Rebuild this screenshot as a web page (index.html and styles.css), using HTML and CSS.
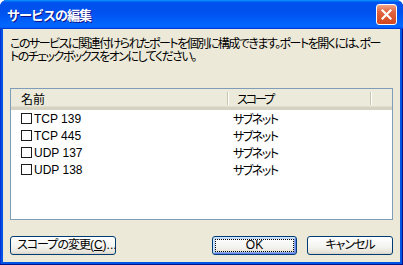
FILE: index.html
```html
<!DOCTYPE html>
<html lang="ja">
<head>
  <meta charset="UTF-8">
  <title>サービスの編集</title>
  <link rel="stylesheet" href="styles.css">
</head>
<body>
  <div class="window">
    <!-- Title bar -->
    <div class="titlebar">
      <span class="title">サービスの編集</span>
      <button class="close-btn" aria-label="閉じる">
        <svg width="11" height="11" viewBox="0 0 11 11">
          <path d="M1.5 1.5 L9.5 9.5 M9.5 1.5 L1.5 9.5" stroke="#fff" stroke-width="2.2" stroke-linecap="square"/>
        </svg>
      </button>
    </div>

    <div class="client">
      <p class="intro">このサービスに関連付けられたポートを個別に構成できます。ポートを開くには、ポー<br>トのチェックボックスをオンにしてください。</p>

      <!-- Port list -->
      <div class="listview">
        <div class="lv-header">
          <div class="col col-name">名前</div>
          <div class="col col-scope">スコープ</div>
          <div class="col col-rest"></div>
        </div>
        <div class="lv-row">
          <span class="cell cell-name"><span class="check"></span>TCP 139</span>
          <span class="cell cell-scope">サブネット</span>
        </div>
        <div class="lv-row">
          <span class="cell cell-name"><span class="check"></span>TCP 445</span>
          <span class="cell cell-scope">サブネット</span>
        </div>
        <div class="lv-row">
          <span class="cell cell-name"><span class="check"></span>UDP 137</span>
          <span class="cell cell-scope">サブネット</span>
        </div>
        <div class="lv-row">
          <span class="cell cell-name"><span class="check"></span>UDP 138</span>
          <span class="cell cell-scope">サブネット</span>
        </div>
      </div>

      <!-- Buttons -->
      <div class="actions">
        <button class="btn btn-scope"><span class="jp">スコープの変更</span>(<u>C</u>)...</button>
        <span class="spacer"></span>
        <button class="btn btn-default">OK</button>
        <button class="btn"><span class="jp">キャンセル</span></button>
      </div>
    </div>
  </div>
</body>
</html>
```

FILE: styles.css
```css
body {
  margin: 0;
  background: #ffffff;
  font-family: "Liberation Sans", "Noto Sans CJK JP", sans-serif;
  font-size: 12px;
  color: #000;
}

.window {
  width: 403px;
  height: 265px;
  box-sizing: border-box;
  display: flex;
  flex-direction: column;
  background: #0054e3;
  border-radius: 7px 7px 0 0;
  padding: 0 3px 3px;
  box-shadow: inset -1px -1px #00138c, inset 1px 0 #0831d9;
}

/* Title bar */
.titlebar {
  height: 29px;
  margin: 0 -3px;
  padding: 0 6px 0 7px;
  display: flex;
  align-items: center;
  border-radius: 7px 7px 0 0;
  background: linear-gradient(to bottom, #0997ff 0%, #0053ee 8%, #0050ee 40%, #0066ff 88%, #0066ff 93%, #005bff 95%, #003dd7 96%, #003dd7 100%);
}

.title {
  flex: 1;
  color: #fff;
  font-family: "Noto Sans CJK JP", sans-serif;
  font-weight: bold;
  font-size: 13px;
  letter-spacing: -1px;
  text-shadow: 1px 1px #0f1089;
}

.close-btn {
  width: 21px;
  height: 21px;
  padding: 0;
  border: 1px solid #fff;
  border-radius: 3px;
  background: linear-gradient(to bottom, #f0a58a 0%, #e0653f 35%, #d4461e 100%);
  display: flex;
  align-items: center;
  justify-content: center;
}

/* Client area */
.client {
  flex: 1;
  background: #ece9d8;
  padding: 7px 7px 0;
  display: flex;
  flex-direction: column;
}

.intro {
  margin: 0;
  font-family: "Noto Sans CJK JP", sans-serif;
  font-feature-settings: "palt";
  letter-spacing: -1.5px;
  line-height: 13px;
  height: 26px;
  white-space: nowrap;
}

/* List view */
.listview {
  margin-top: 26px;
  height: 132px;
  box-sizing: border-box;
  border: 1px solid #7f9db9;
  background: #fff;
}

.lv-header {
  display: flex;
  height: 21px;
  box-sizing: border-box;
  background: #ebeadb;
  border-bottom: 3px solid #d6d2c2;
  box-shadow: 0 -1px #e2decd inset;
}

.col {
  display: flex;
  align-items: center;
  font-family: "Noto Sans CJK JP", sans-serif;
  font-feature-settings: "palt";
  box-sizing: border-box;
}

.col-name {
  width: 217px;
  padding-left: 10px;
  border-right: 1px solid #c7c5b2;
  box-shadow: 1px 0 #fff;
  margin: 3px 0 2px;
}

.col-scope {
  width: 143px;
  padding-left: 9px;
  letter-spacing: -2px;
  border-right: 1px solid #c7c5b2;
  box-shadow: 1px 0 #fff;
  margin: 3px 0 2px;
}

.col-rest {
  flex: 1;
}

.lv-row {
  display: flex;
  height: 17px;
  align-items: center;
}

.cell {
  display: flex;
  align-items: center;
}

.cell-name {
  box-sizing: border-box;
  width: 222px;
  padding-left: 10px;
}

.cell-scope {
  font-feature-settings: "palt";
  letter-spacing: -1.5px;
}

.check {
  width: 9px;
  height: 9px;
  border: 1px solid #1c1c1c;
  margin-right: 2px;
  background: #fff;
}

/* Buttons */
.actions {
  display: flex;
  margin-top: 16px;
  gap: 10px;
}

.spacer {
  flex: 1;
}

.btn {
  height: 19px;
  width: 86px;
  padding: 0;
  border: 1px solid #003c74;
  border-radius: 3px;
  background: linear-gradient(to bottom, #ffffff 0%, #f3f3ef 60%, #e6e3d8 90%, #d6d0c5 100%);
  font-family: "Liberation Sans", "Noto Sans CJK JP", sans-serif;
  font-size: 12px;
  color: #000;
  line-height: 15px;
  white-space: nowrap;
}

.btn .jp {
  font-feature-settings: "palt";
  letter-spacing: -1px;
}

.btn-scope {
  width: 106px;
  text-align: left;
  padding-left: 6px;
}

.btn-default {
  width: 85px;
  box-shadow: inset 1px 1px #cee7ff, inset -1px -1px #6982ee, inset 2px 2px #bcd4f6, inset -2px -2px #89ade4;
  outline: 1px dotted #000;
  outline-offset: -4px;
}
```
